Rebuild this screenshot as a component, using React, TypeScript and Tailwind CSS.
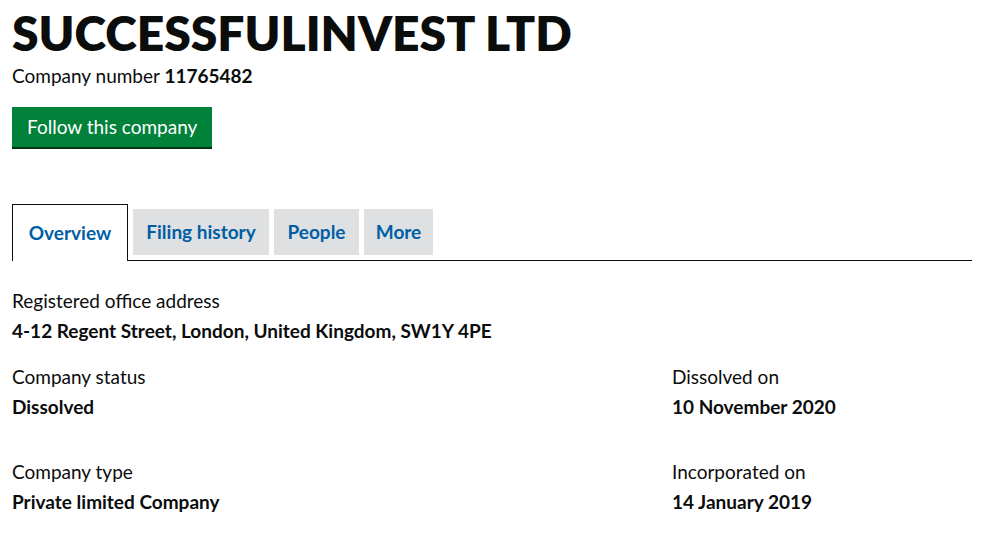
const tabs = [
  { label: "Filing history", w: "w-[136px]" },
  { label: "People", w: "w-[85px]" },
  { label: "More", w: "w-[69px]" },
];

function Field({ label, value }: { label: string; value: string }) {
  return (
    <div>
      <p className="text-[19px] leading-[30px]">{label}</p>
      <p className="text-[19px] leading-[30px] font-bold">{value}</p>
    </div>
  );
}

export default function App() {
  return (
    <div className="min-h-screen bg-white text-[#0b0c0c] font-['Lato',sans-serif]">
      <div className="w-[960px] ml-[12px]">
        <h1 className="text-[48px] leading-[64px] font-extrabold pt-[1px]">SUCCESSFULINVEST LTD</h1>
        <p className="text-[19px] leading-[22px]">
          Company number <strong className="font-bold">11765482</strong>
        </p>
        <button className="mt-[20px] h-[40px] px-[15px] bg-[#00823b] text-white text-[19px] shadow-[0_2px_0_#003618]">
          Follow this company
        </button>

        <div className="mt-[57px] flex items-end border-b border-[#0b0c0c]">
          <div className="w-[116px] h-[57px] flex items-center justify-center border border-b-0 border-[#0b0c0c] bg-white -mb-px text-[#005ea5] font-bold text-[19px]">
            Overview
          </div>
          {tabs.map((t) => (
            <div
              key={t.label}
              className={`${t.w} ml-[5px] mb-[5px] h-[46px] flex items-center justify-center bg-[#dee0e2] text-[#005ea5] font-bold text-[19px]`}
            >
              {t.label}
            </div>
          ))}
        </div>

        <div className="mt-[25px]">
          <Field label="Registered office address" value="4-12 Regent Street, London, United Kingdom, SW1Y 4PE" />
        </div>
        <div className="mt-[16px] flex">
          <div className="w-[660px] flex flex-col gap-[35px]">
            <Field label="Company status" value="Dissolved" />
            <Field label="Company type" value="Private limited Company" />
          </div>
          <div className="flex flex-col gap-[35px]">
            <Field label="Dissolved on" value="10 November 2020" />
            <Field label="Incorporated on" value="14 January 2019" />
          </div>
        </div>
      </div>
    </div>
  );
}
